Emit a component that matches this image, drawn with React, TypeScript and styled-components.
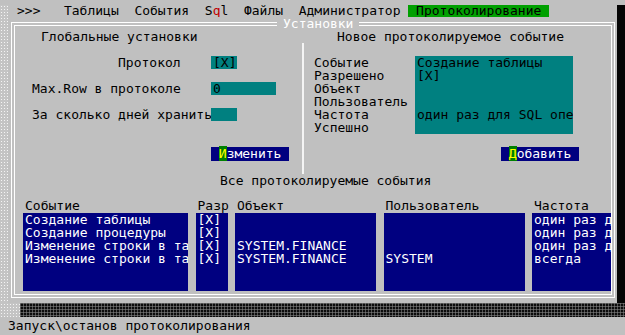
import React from 'react';
import styled, {createGlobalStyle} from 'styled-components';

const GlobalStyle = createGlobalStyle`
  html, body {
    margin: 0;
    padding: 0;
  }

  body {
    width: 625px;
    height: 335px;
    overflow: hidden;
    background: #c0c0c0;
    color: #000;
    font-family: "DejaVu Sans Mono", "Liberation Mono", monospace;
    font-size: 13px;
    line-height: 13px;
  }
`;

const Screen = styled.div`
  width: 625px;
  height: 335px;
  display: grid;
  grid-template-columns: 8px 609px 8px;
  grid-template-rows: 5px 298px 14px 18px;
  background: #c0c0c0;
`;

const TopGap = styled.div`
  grid-column: 1 / -1;
`;

const LightShade = styled.div`
  background-color: #c4c4c4;
  background-image: radial-gradient(circle, #f4f4f4 0.7px, transparent 0.9px);
  background-size: 3px 3px;
`;

const DarkShade = styled.div`
  background: #050505;
`;

const Desk = styled.div`
  display: flex;
  flex-direction: column;
  min-height: 0;
`;

const MenuBar = styled.nav`
  display: flex;
  gap: 2ch;
  height: 12px;
  line-height: 12px;
  padding-left: 9px;
  white-space: pre;
`;

const MenuItem = styled.span<{$active?: boolean}>`
  background: ${p => (p.$active ? '#00a000' : 'transparent')};
  padding: ${p => (p.$active ? '0 1ch' : '0')};
  margin-left: ${p => (p.$active ? '-1ch' : '0')};
  &:first-child {
    margin-right: 1ch;
  }
`;

const MenuHot = styled.span`
  color: #c00000;
`;

const Window = styled.div`
  flex: 1;
  display: flex;
  flex-direction: column;
  padding: 0 2px 5px 3px;
  background: #c0c0c0;
`;

const Frame = styled.fieldset`
  flex: 1;
  margin: 0;
  padding: 0;
  min-width: 0;
  border: 4px double #fff;
`;

const Title = styled.legend`
  margin-left: 262px;
  padding: 0 6px;
  line-height: 13px;
  color: #fff;
`;

const TopSection = styled.div`
  display: grid;
  grid-template-columns: 287px 1fr;
  grid-template-rows: 13px 131px;
`;

const Heading = styled.div<{$indent: number}>`
  padding-left: ${p => p.$indent}px;
  white-space: pre;
`;

const FormGrid = styled.div`
  display: grid;
  grid-template-columns: 179px auto;
  grid-auto-rows: 13px;
  row-gap: 13px;
  justify-items: start;
  align-content: start;
  padding: 13px 0 0 17px;
`;

const Label = styled.div<{$indent?: number}>`
  padding-left: ${p => p.$indent ?? 0}px;
  white-space: pre;
`;

const Field = styled.div<{$w: number}>`
  box-sizing: border-box;
  width: ${p => p.$w}px;
  height: 13px;
  padding-left: 2px;
  background: #008080;
  color: #000;
  white-space: pre;
`;

const Button = styled.div`
  height: 14px;
  line-height: 14px;
  padding: 0 1ch;
  background: #000080;
  color: #fff;
  white-space: pre;
`;

const ButtonHot = styled.span`
  background: #008000;
  color: #ffff00;
`;

const LeftButton = styled(Button)`
  grid-column: 2;
  margin-top: 13px;
`;

const EventPanel = styled.div`
  border-left: 2px solid #f4f4f4;
  padding: 13px 0 0 10px;
  display: flex;
  flex-direction: column;
  align-items: flex-start;
`;

const EventRow = styled.div`
  display: flex;
`;

const EventLabels = styled.div`
  width: 101px;
  white-space: pre;
`;

const EventBox = styled.div`
  box-sizing: border-box;
  width: 158px;
  height: 78px;
  padding-left: 2px;
  background: #008080;
  white-space: pre;
  overflow: hidden;
`;

const RightButton = styled(Button)`
  margin: 13px 0 0 187px;
`;

const ListTitle = styled.div`
  padding-left: 205px;
  margin-bottom: 13px;
  white-space: pre;
`;

const Table = styled.div`
  display: grid;
  grid-template-columns: 165px 32px 141px 141px 79px;
  column-gap: 7.5px;
  padding-left: 8px;
`;

const ColHead = styled.div`
  height: 12px;
  line-height: 12px;
  margin-bottom: 1px;
  padding-left: 2px;
  white-space: pre;
`;

const ColBody = styled.div`
  box-sizing: border-box;
  height: 78px;
  padding-left: 2px;
  background: #000080;
  color: #fff;
  white-space: pre;
  overflow: hidden;
`;

const Band = styled.div`
  grid-column: 1 / -1;
  display: grid;
  grid-template-columns: 20px 1fr;
`;

const Mesh = styled.div`
  background-color: #0c0c0c;
  background-image:
    linear-gradient(90deg, rgba(140, 140, 140, 0.55) 1px, transparent 1px),
    linear-gradient(rgba(140, 140, 140, 0.55) 1px, transparent 1px);
  background-size: 3px 3px;
`;

const StatusBar = styled.div`
  grid-column: 1 / -1;
  line-height: 18px;
  padding-left: 8px;
  white-space: pre;
`;

const menu = ['>>>', 'Таблицы', 'События', 'Sql', 'Файлы', 'Администратор', 'Протоколирование'];

const columns = [
  {head: 'Событие', rows: ['Создание таблицы', 'Создание процедуры', 'Изменение строки в та', 'Изменение строки в та']},
  {head: 'Разр', rows: ['[X]', '[X]', '[X]', '[X]']},
  {head: 'Объект', rows: ['', '', 'SYSTEM.FINANCE', 'SYSTEM.FINANCE']},
  {head: 'Пользователь', rows: ['', '', '', 'SYSTEM']},
  {head: 'Частота', rows: ['один раз д', 'один раз д', 'один раз д', 'всегда']},
];

function App() {
  return <>
    <GlobalStyle/>
    <Screen>
      <TopGap/>
      <LightShade/>
      <Desk>
        <MenuBar>
          {menu.map(item => <MenuItem key={item} $active={item === 'Протоколирование'}>
            {item === 'Sql' ? <>S<MenuHot>q</MenuHot>l</> : item}
          </MenuItem>)}
        </MenuBar>
        <Window>
          <Frame>
            <Title>Установки</Title>
            <TopSection>
              <Heading $indent={26}>Глобальные установки</Heading>
              <Heading $indent={35}>Новое протоколируемое событие</Heading>
              <FormGrid>
                <Label $indent={86}>Протокол</Label>
                <Field $w={26}>[X]</Field>
                <Label>Max.Row в протоколе</Label>
                <Field $w={65}>0</Field>
                <Label>За сколько дней хранить</Label>
                <Field $w={26}/>
                <LeftButton><ButtonHot>И</ButtonHot>зменить</LeftButton>
              </FormGrid>
              <EventPanel>
                <EventRow>
                  <EventLabels>{'Событие\nРазрешено\nОбъект\nПользователь\nЧастота\nУспешно'}</EventLabels>
                  <EventBox>{'Создание таблицы\n[X]\n\n\nодин раз для SQL опе\n'}</EventBox>
                </EventRow>
                <RightButton><ButtonHot>Д</ButtonHot>обавить</RightButton>
              </EventPanel>
            </TopSection>
            <ListTitle>Все протоколируемые события</ListTitle>
            <Table>
              {columns.map(col => <div key={col.head}>
                <ColHead>{col.head}</ColHead>
                <ColBody>{col.rows.join('\n')}</ColBody>
              </div>)}
            </Table>
          </Frame>
        </Window>
      </Desk>
      <DarkShade/>
      <Band>
        <LightShade/>
        <Mesh/>
      </Band>
      <StatusBar>Запуск\останов протоколирования</StatusBar>
    </Screen>
  </>;
}

export default App;
